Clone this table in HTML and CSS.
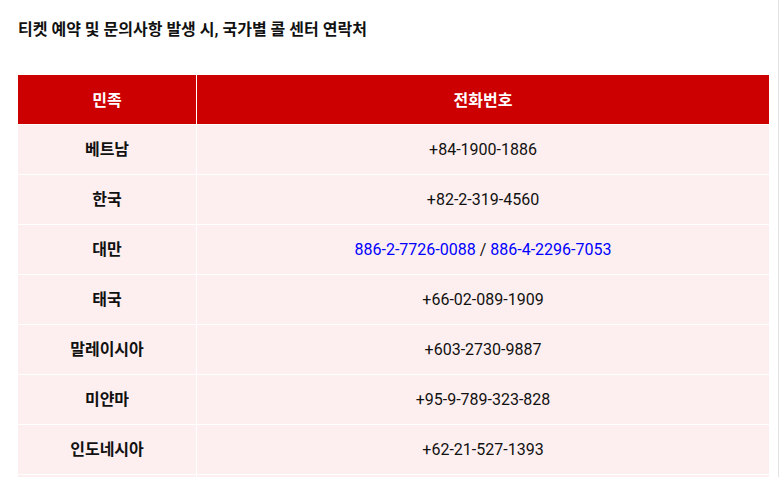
FILE: index.html
```html
<!DOCTYPE html>
<html lang="ko">
<head>
<meta charset="utf-8">
<title>국가별 콜 센터 연락처</title>
<link rel="stylesheet" href="styles.css">
</head>
<body>
<div class="page">
  <h2 class="title">티켓 예약 및 문의사항 발생 시, 국가별 콜 센터 연락처</h2>
  <table class="contacts">
    <thead>
      <tr><th class="col-nation">민족</th><th>전화번호</th></tr>
    </thead>
    <tbody>
      <tr><td class="nation">베트남</td><td>+84-1900-1886</td></tr>
      <tr><td class="nation">한국</td><td>+82-2-319-4560</td></tr>
      <tr><td class="nation">대만</td><td><a href="#">886-2-7726-0088</a> / <a href="#">886-4-2296-7053</a></td></tr>
      <tr><td class="nation">태국</td><td>+66-02-089-1909</td></tr>
      <tr><td class="nation">말레이시아</td><td>+603-2730-9887</td></tr>
      <tr><td class="nation">미얀마</td><td>+95-9-789-323-828</td></tr>
      <tr><td class="nation">인도네시아</td><td>+62-21-527-1393</td></tr>
      <tr><td class="nation"></td><td></td></tr>
    </tbody>
  </table>
</div>
</body>
</html>
```
FILE: styles.css
```css
html, body {
  margin: 0;
  padding: 0;
  background: #ffffff;
}
body {
  font-family: Roboto, "Noto Sans CJK KR", "Liberation Sans", sans-serif;
  font-size: 16px;
  color: #111111;
  overflow: hidden;
}
.page {
  width: 779px;
  min-height: 100vh;
  border-right: 1px solid #e2e2e2;
  padding: 18px 0 0 18px;
  box-sizing: border-box;
}
.title {
  margin: 0;
  font-size: 16px;
  line-height: 24px;
  font-weight: 700;
  color: #111111;
}
.contacts {
  margin-top: 33px;
  width: 751px;
  border-collapse: separate;
  border-spacing: 0;
}
.contacts th,
.contacts td {
  box-sizing: border-box;
  height: 50px;
  padding: 0;
  text-align: center;
  vertical-align: middle;
  border-bottom: 1px solid #ffffff;
}
.contacts th {
  background: #cc0000;
  color: #ffffff;
  font-weight: 700;
  padding-bottom: 2px;
}
.contacts th.col-nation {
  width: 179px;
  border-right: 1px solid #ffffff;
}
.contacts td {
  background: #fdefef;
  font-weight: 400;
}
.contacts td.nation {
  border-right: 1px solid #ffffff;
  font-weight: 700;
  padding-bottom: 3px;
}
.contacts a {
  color: #0000ff;
  text-decoration: none;
}
```
